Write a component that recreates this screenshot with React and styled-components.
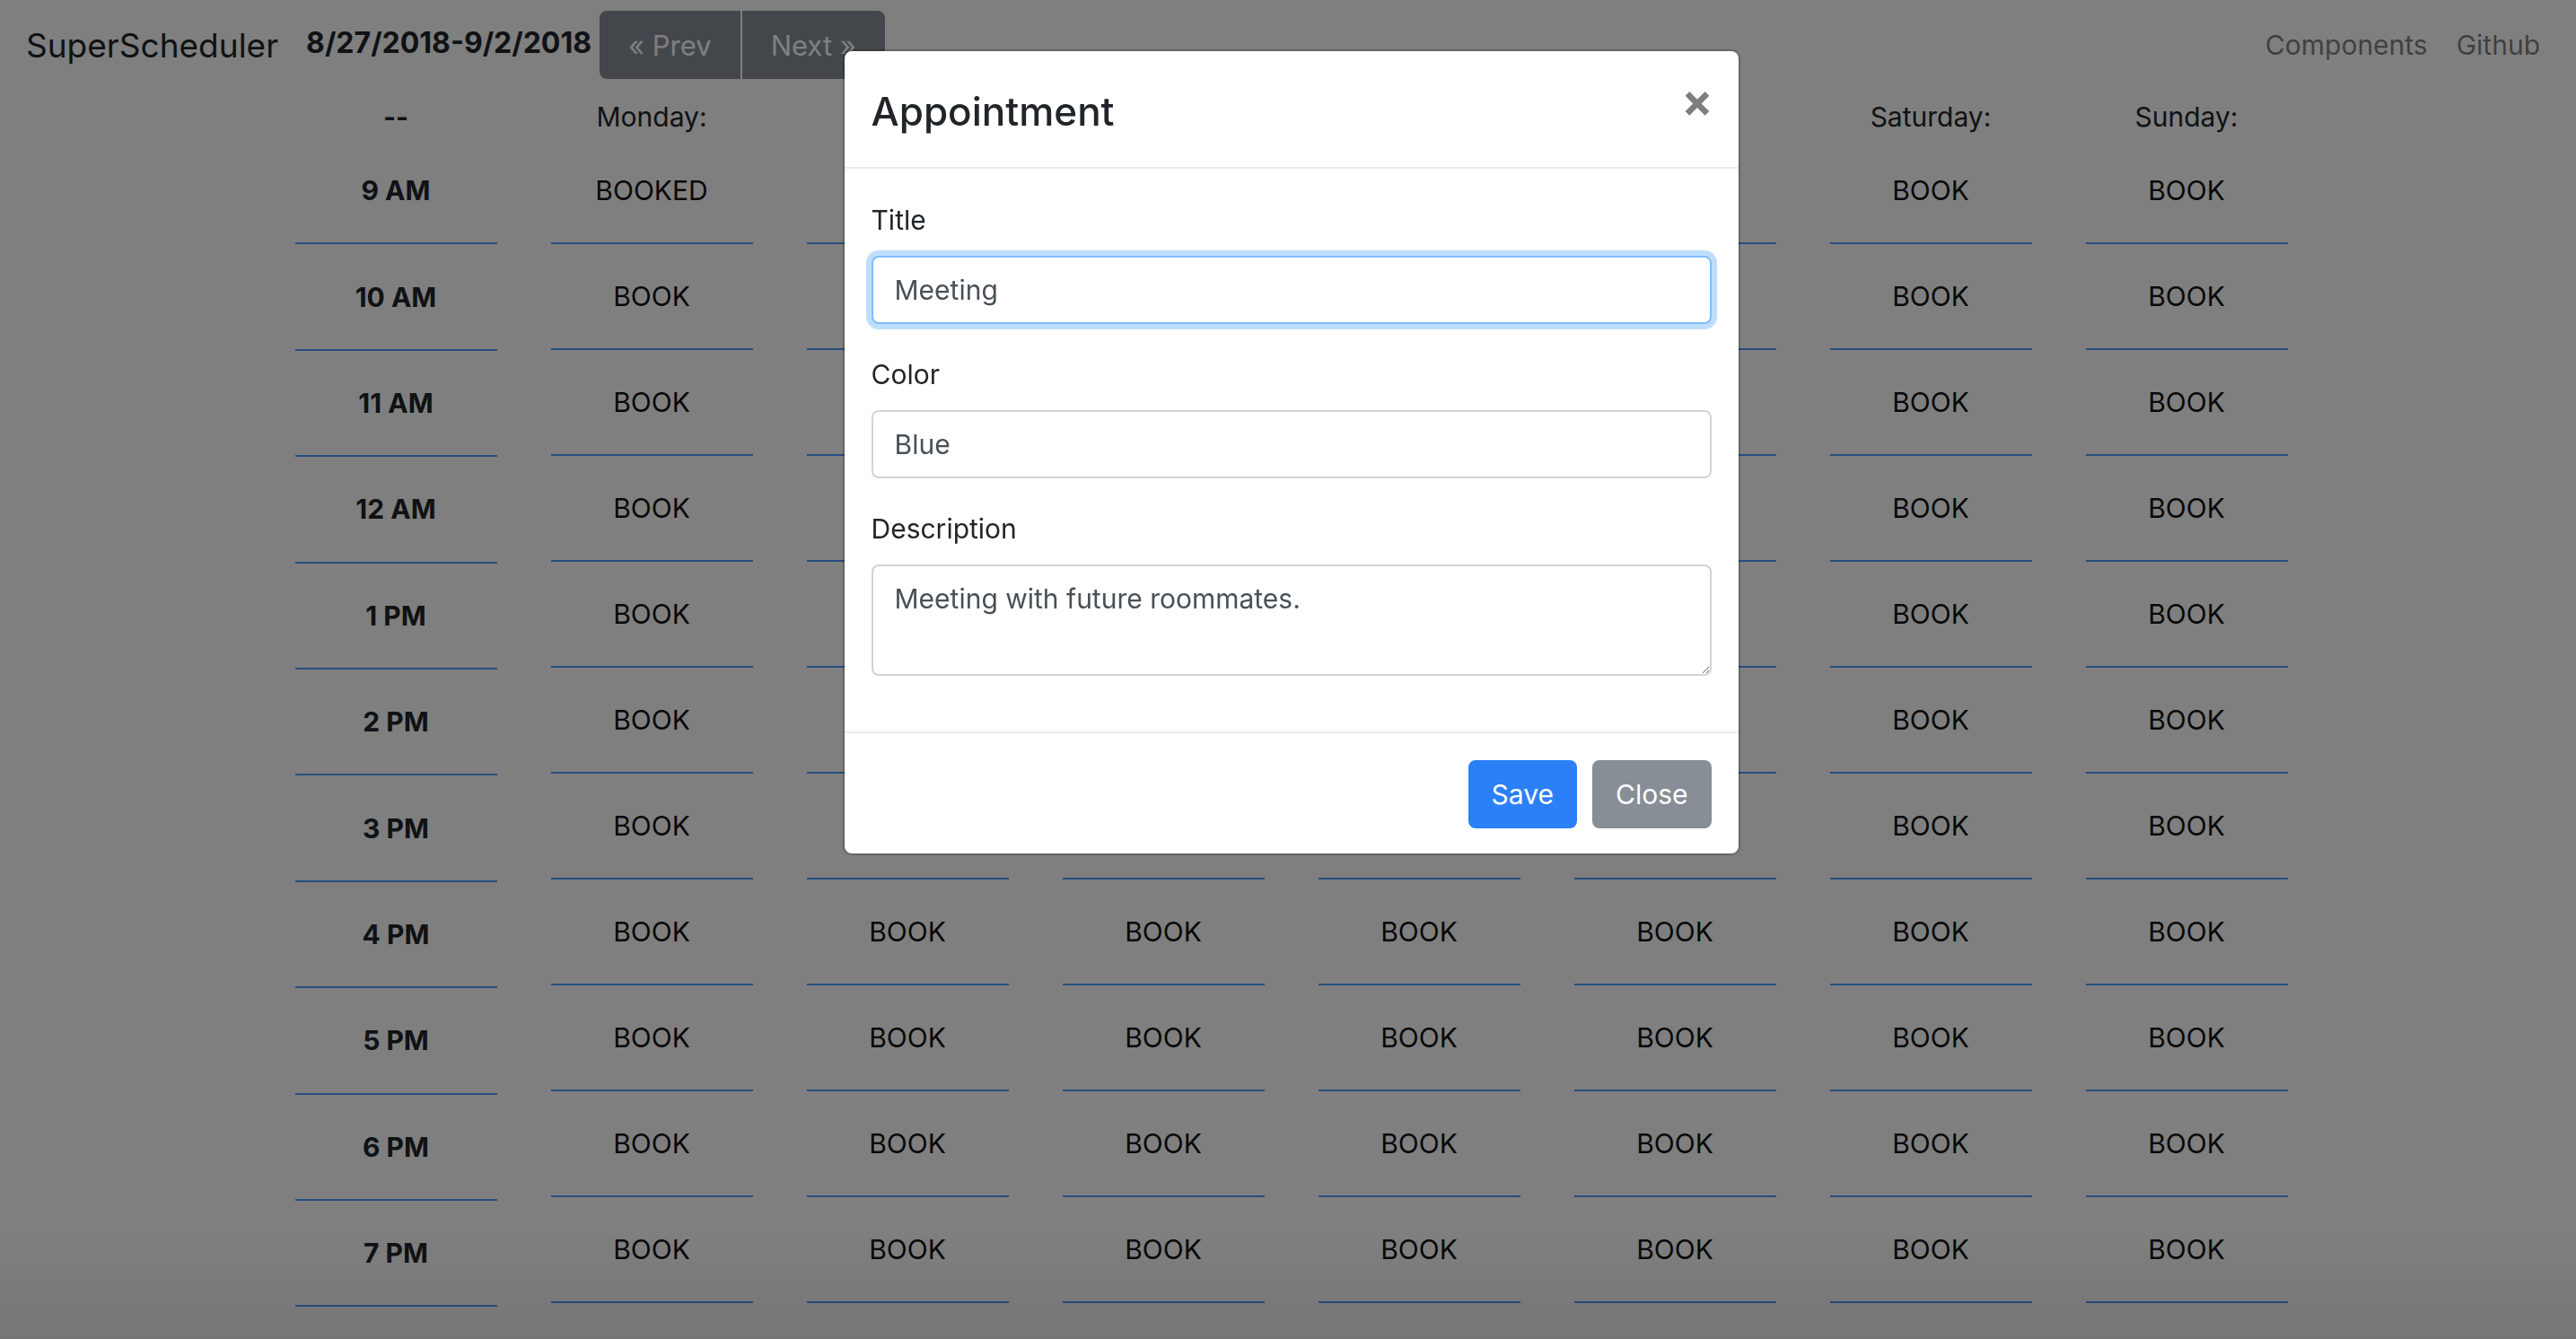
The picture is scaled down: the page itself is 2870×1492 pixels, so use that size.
import React from "react";
import styled, { createGlobalStyle } from "styled-components";

const GlobalStyle = createGlobalStyle`
  html, body {
    margin: 0;
    padding: 0;
    background: #fff;
  }
  body {
    font-family: Inter, "Liberation Sans", Arial, sans-serif;
    color: #212529;
    overflow: hidden;
  }
  * {
    box-sizing: border-box;
  }
`;

const days = [
  "Monday:",
  "Tuesday:",
  "Wednesday:",
  "Thursday:",
  "Friday:",
  "Saturday:",
  "Sunday:",
];

const hours = [
  "9 AM",
  "10 AM",
  "11 AM",
  "12 AM",
  "1 PM",
  "2 PM",
  "3 PM",
  "4 PM",
  "5 PM",
  "6 PM",
  "7 PM",
];

// Monday 9 AM is the only taken slot
const booked = { "0-0": true };

const Page = styled.div`
  width: 2870px;
  height: 1492px;
`;

const Navbar = styled.nav`
  height: 100px;
  display: flex;
  align-items: center;
  padding: 0 24px 0 29px;
`;

const Brand = styled.a`
  font-size: 37px;
  color: #212529;
  margin-right: 31px;
  white-space: nowrap;
`;

const DateRange = styled.span`
  font-size: 32px;
  font-weight: 700;
  margin-right: 9px;
  margin-bottom: 6px;
  white-space: nowrap;
`;

const BtnGroup = styled.div`
  display: flex;
`;

const NavButton = styled.button`
  height: 76px;
  padding: 0 30px;
  border: 2px solid #868e96;
  background: #868e96;
  color: #fff;
  font: inherit;
  font-size: 31px;
  border-radius: ${(p) => (p.$first ? "8px 0 0 8px" : "0 8px 8px 0")};
  margin-left: ${(p) => (p.$first ? "0" : "2px")};
`;

const NavLinks = styled.div`
  margin-left: auto;
  display: flex;
`;

const NavLink = styled.a`
  font-size: 30px;
  padding: 0 16px;
  color: rgba(0, 0, 0, 0.5);
`;

const Main = styled.main`
  padding: 6px 0 0 7px;
`;

const Week = styled.div`
  width: 2220px;
  margin: 0 auto;
  display: grid;
  grid-template-columns: repeat(8, 1fr);
  column-gap: 60px;
`;

const Column = styled.div`
  display: flex;
  flex-direction: column;
`;

const DayHeader = styled.div`
  height: 48px;
  line-height: 48px;
  text-align: center;
  font-size: 30px;
  font-weight: ${(p) => (p.$bold ? 700 : 400)};
  color: #212529;
`;

const Slot = styled.div`
  height: ${(p) => (p.$time ? "118.4px" : "118px")};
  display: flex;
  align-items: center;
  justify-content: center;
  font-size: 30px;
  line-height: 48px;
  font-weight: ${(p) => (p.$time ? 700 : 400)};
  color: ${(p) => (p.$time ? "#212529" : "#111")};
  border-bottom: 2px solid #4d9dff;
`;

const Backdrop = styled.div`
  position: fixed;
  inset: 0;
  background: linear-gradient(to bottom, transparent 92%, rgba(0, 0, 0, 0.07)),
    rgba(0, 0, 0, 0.5);
`;

const ModalWrap = styled.div`
  position: fixed;
  inset: 0;
  padding-left: 7px;
`;

const Modal = styled.div`
  width: 1000px;
  margin: 55px auto 0;
  background: #fff;
  background-clip: padding-box;
  border: 2px solid rgba(0, 0, 0, 0.2);
  border-radius: 10px;
`;

const ModalHeader = styled.div`
  display: flex;
  align-items: flex-start;
  justify-content: space-between;
  padding: 34px 30px 29px;
  border-bottom: 2px solid #e9ecef;
`;

const ModalTitle = styled.h5`
  margin: 0;
  font-size: 44px;
  line-height: 66px;
  font-weight: 500;
  color: #212529;
`;

const CloseButton = styled.button`
  background: none;
  border: 0;
  padding: 0;
  margin: -5px -2px 0 0;
  font-family: Inter, "Liberation Sans", Arial, sans-serif;
  font-size: 52px;
  line-height: 1;
  font-weight: 700;
  color: #000;
  opacity: 0.5;
`;

const ModalBody = styled.div`
  padding: 33px 30px 30px;
`;

const FormGroup = styled.div`
  margin-bottom: 32px;
`;

const Label = styled.label`
  display: block;
  font-size: 30px;
  line-height: 48px;
  margin-bottom: 16px;
  color: #212529;
`;

const fieldStyles = `
  display: block;
  width: 100%;
  padding: 12px 24px;
  font-family: Inter, "Liberation Sans", Arial, sans-serif;
  font-size: 30px;
  line-height: 48px;
  color: #495057;
  background: #fff;
  border: 2px solid #ced4da;
  border-radius: 8px;
  outline: none;
`;

const Input = styled.input`
  ${fieldStyles}
  height: 76px;
  ${(p) =>
    p.$focused &&
    `
    border-color: #80bdff;
    box-shadow: 0 0 0 6px rgba(0, 123, 255, 0.25);
  `}
`;

const TextArea = styled.textarea`
  ${fieldStyles}
  height: 124px;
  resize: vertical;
`;

const ModalFooter = styled.div`
  display: flex;
  justify-content: flex-end;
  gap: 17px;
  padding: 30px 30px 28px;
  border-top: 2px solid #e9ecef;
`;

const Button = styled.button`
  height: 76px;
  padding: 0 24px;
  border-radius: 8px;
  font-family: Inter, "Liberation Sans", Arial, sans-serif;
  font-size: 30px;
  color: #fff;
  border: 2px solid ${(p) => (p.$variant === "primary" ? "#2b80f7" : "#878e96")};
  background: ${(p) => (p.$variant === "primary" ? "#2b80f7" : "#878e96")};
`;

function Schedule() {
  return (
    <Week>
      <Column>
        <DayHeader $bold>--</DayHeader>
        {hours.map((h) => (
          <Slot key={h} $time>
            {h}
          </Slot>
        ))}
      </Column>
      {days.map((d, di) => (
        <Column key={d}>
          <DayHeader>{d}</DayHeader>
          {hours.map((h, hi) => (
            <Slot key={h}>{booked[`${di}-${hi}`] ? "BOOKED" : "BOOK"}</Slot>
          ))}
        </Column>
      ))}
    </Week>
  );
}

function AppointmentModal() {
  return (
    <ModalWrap>
      <Modal>
        <ModalHeader>
          <ModalTitle>Appointment</ModalTitle>
          <CloseButton type="button">×</CloseButton>
        </ModalHeader>
        <ModalBody>
          <FormGroup>
            <Label>Title</Label>
            <Input $focused defaultValue="Meeting" />
          </FormGroup>
          <FormGroup>
            <Label>Color</Label>
            <Input defaultValue="Blue" />
          </FormGroup>
          <FormGroup>
            <Label>Description</Label>
            <TextArea rows={2} defaultValue="Meeting with future roommates." />
          </FormGroup>
        </ModalBody>
        <ModalFooter>
          <Button $variant="primary">Save</Button>
          <Button $variant="secondary">Close</Button>
        </ModalFooter>
      </Modal>
    </ModalWrap>
  );
}

export default function App() {
  return (
    <>
      <GlobalStyle />
      <Page>
        <Navbar>
          <Brand>SuperScheduler</Brand>
          <DateRange>8/27/2018-9/2/2018</DateRange>
          <BtnGroup>
            <NavButton $first>« Prev</NavButton>
            <NavButton>Next »</NavButton>
          </BtnGroup>
          <NavLinks>
            <NavLink>Components</NavLink>
            <NavLink>Github</NavLink>
          </NavLinks>
        </Navbar>
        <Main>
          <Schedule />
        </Main>
      </Page>
      <Backdrop />
      <AppointmentModal />
    </>
  );
}
